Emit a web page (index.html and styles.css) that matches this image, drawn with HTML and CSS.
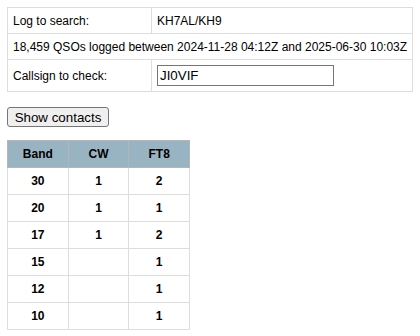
FILE: index.html
```html
<!DOCTYPE html>
<html lang="en">
<head>
  <meta charset="UTF-8">
  <title>Log check</title>
  <link rel="stylesheet" href="styles.css">
</head>
<body>
  <form class="search">
    <table class="info">
      <tr>
        <td class="label">Log to search:</td>
        <td>KH7AL/KH9</td>
      </tr>
      <tr>
        <td colspan="2" class="summary">18,459 QSOs logged between 2024-11-28 04:12Z and 2025-06-30 10:03Z</td>
      </tr>
      <tr>
        <td class="label">Callsign to check:</td>
        <td><input type="text" name="call" value="JI0VIF"></td>
      </tr>
    </table>
    <div class="actions">
      <button type="button">Show contacts</button>
    </div>
  </form>
  <table class="counts">
    <tr><th>Band</th><th>CW</th><th>FT8</th></tr>
    <tr><td>30</td><td>1</td><td>2</td></tr>
    <tr><td>20</td><td>1</td><td>1</td></tr>
    <tr><td>17</td><td>1</td><td>2</td></tr>
    <tr><td>15</td><td></td><td>1</td></tr>
    <tr><td>12</td><td></td><td>1</td></tr>
    <tr><td>10</td><td></td><td>1</td></tr>
  </table>
</body>
</html>
```

FILE: styles.css
```css
body {
  margin: 7px;
  font-family: 'Liberation Sans', Arial, sans-serif;
  font-size: 12px;
  color: #000;
  background: #fff;
}
.info {
  border-collapse: collapse;
  width: 405px;
}
.info td {
  border: 1px solid #ddd;
  padding: 5px 5px;
  height: 15px;
}
.info td.label {
  width: 133px;
}
.info td.summary {
  white-space: nowrap;
}
.info input {
  font-family: 'Liberation Sans', Arial, sans-serif;
  font-size: 13.33px;
  width: 171px;
  height: 17px;
  padding: 1px 2px;
  border: 1px solid #767676;
  margin: 0;
  display: block;
  box-sizing: content-box;
}
.actions {
  margin: 15px 0 13px;
}
.actions button {
  font-family: 'Liberation Sans', Arial, sans-serif;
  font-size: 13.33px;
  padding: 1px 6px;
  height: 20px;
  width: 102px;
  background: #efefef;
  border: 1px solid #767676;
  border-radius: 3px;
  color: #000;
  display: block;
}
.counts {
  border-collapse: collapse;
  width: 183px;
  table-layout: fixed;
}
.counts th {
  background: #98b4c2;
  border: 1px solid #b5b5b5;
  height: 26px;
  padding: 0;
  font-weight: bold;
}
.counts td {
  border: 1px solid #ddd;
  height: 26px;
  padding: 0;
  text-align: center;
  font-weight: bold;
}
```
